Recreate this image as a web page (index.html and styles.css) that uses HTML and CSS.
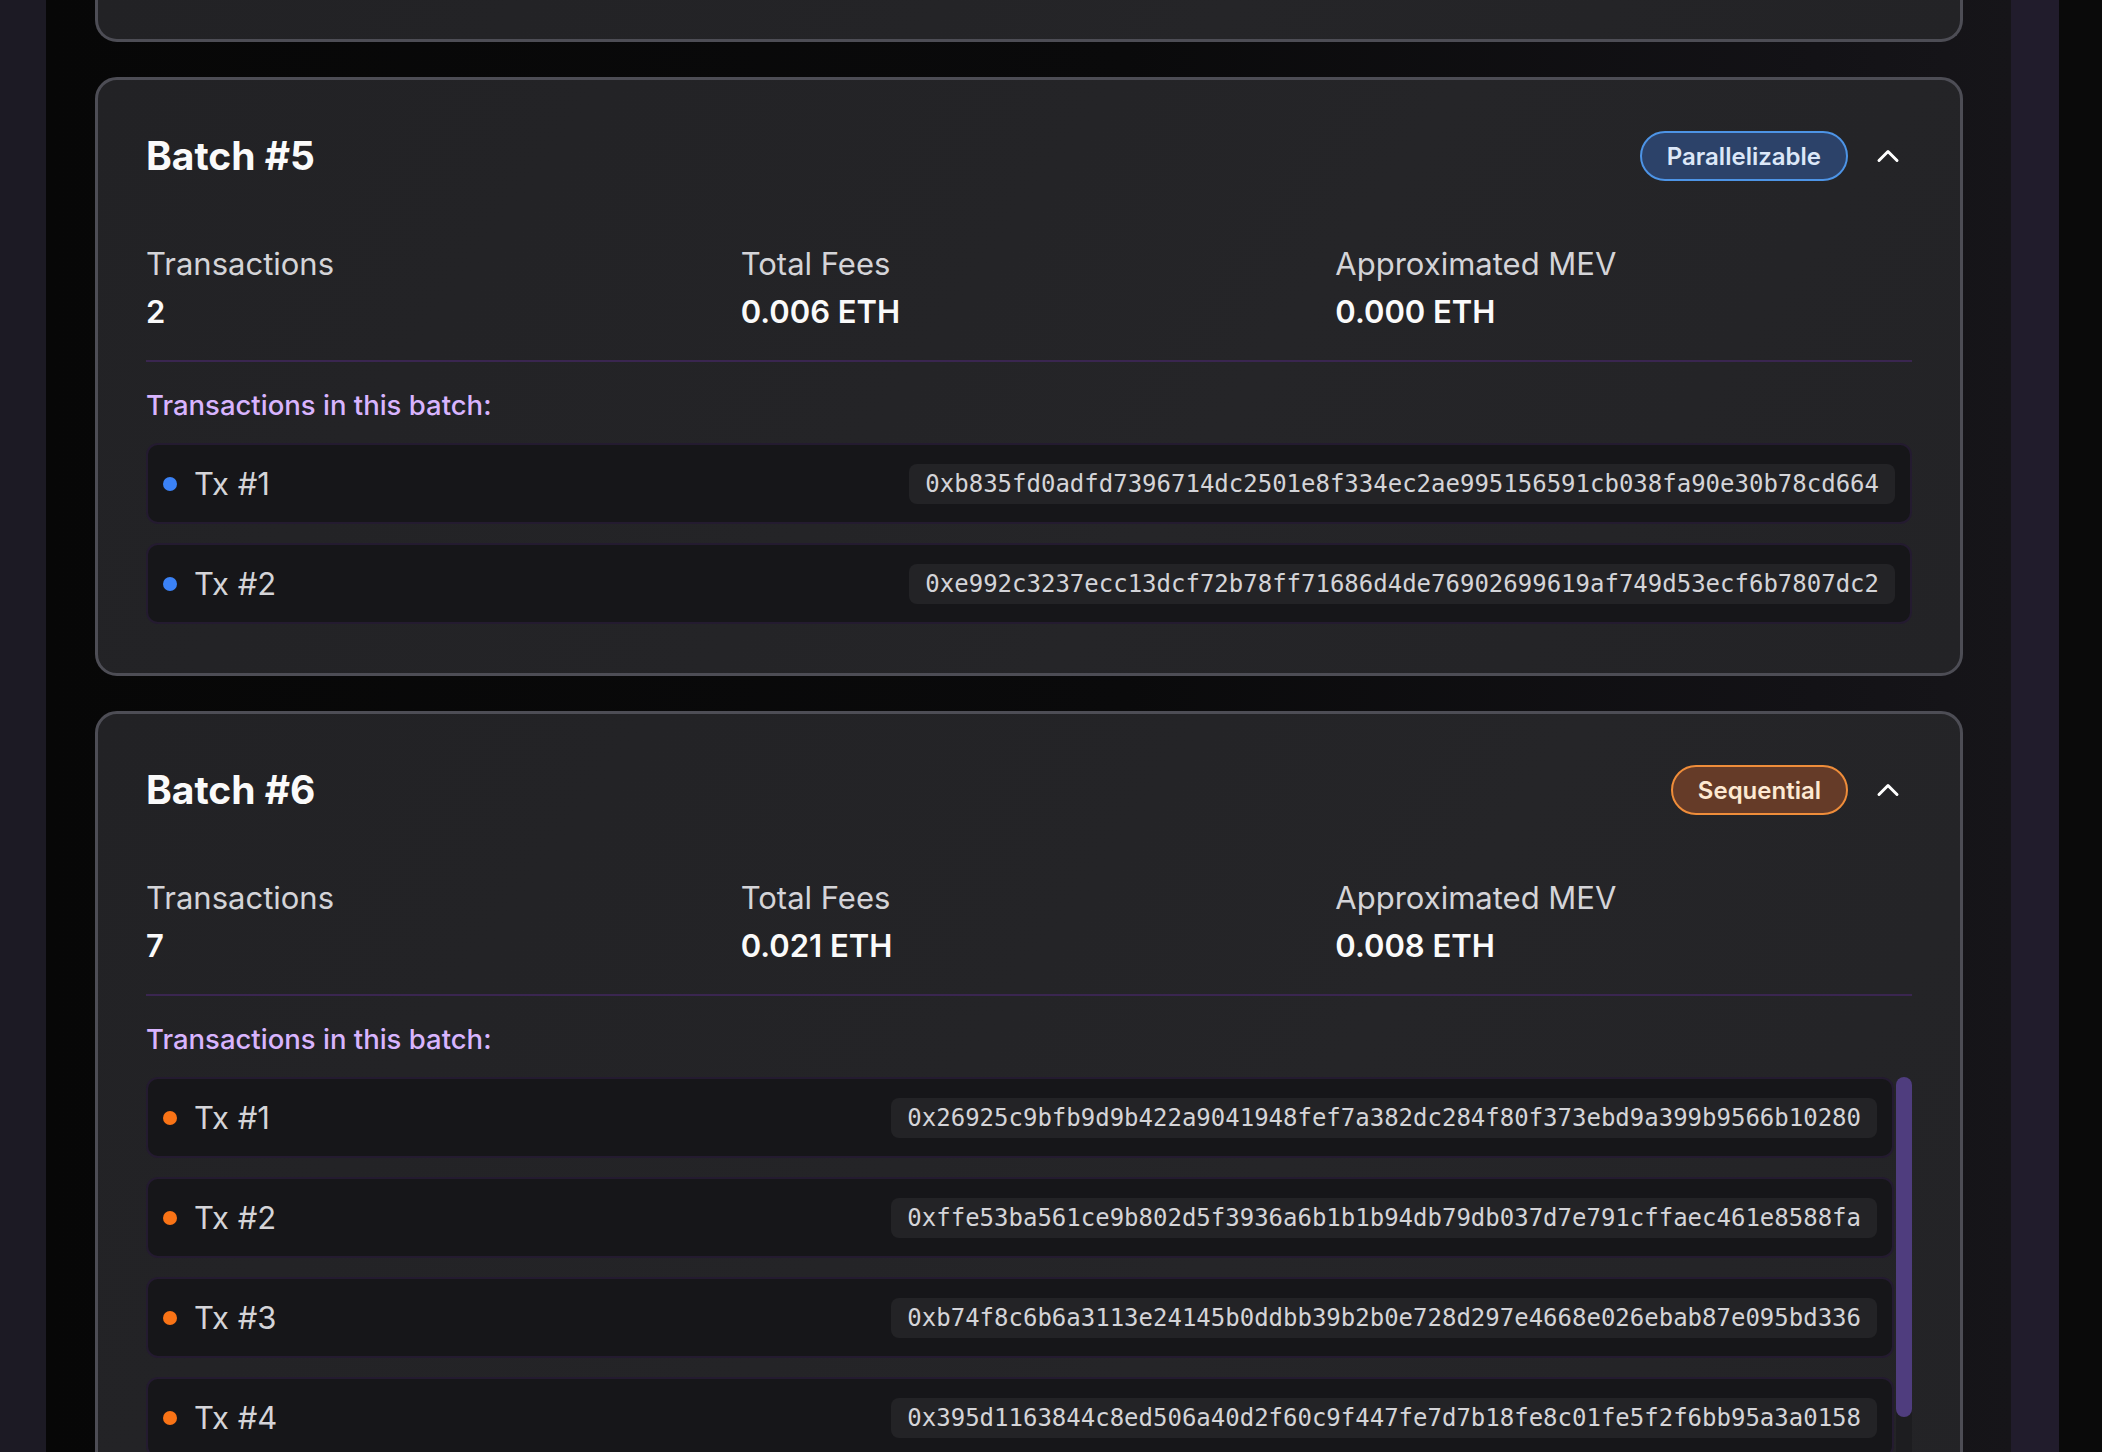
FILE: index.html
```html
<!DOCTYPE html>
<html lang="en">
<head>
<meta charset="utf-8">
<title>Batches</title>
<link rel="stylesheet" href="styles.css">
</head>
<body>
<div class="app">
  <aside class="rail rail-left"></aside>
  <main class="main">
    <section class="card card-tail"></section>

    <section class="card">
      <header class="card-head">
        <h2 class="card-title">Batch #5</h2>
        <div class="head-actions">
          <span class="badge badge-par">Parallelizable</span>
          <button class="toggle" type="button" aria-label="Collapse">
            <svg viewBox="0 0 24 24" width="36" height="36" fill="none" stroke="#fff" stroke-width="2" stroke-linecap="round" stroke-linejoin="round"><path d="m18 15-6-6-6 6"/></svg>
          </button>
        </div>
      </header>
      <div class="stats">
        <div class="stat"><div class="stat-label">Transactions</div><div class="stat-value">2</div></div>
        <div class="stat"><div class="stat-label">Total Fees</div><div class="stat-value">0.006 ETH</div></div>
        <div class="stat"><div class="stat-label">Approximated MEV</div><div class="stat-value">0.000 ETH</div></div>
      </div>
      <h3 class="list-title">Transactions in this batch:</h3>
      <div class="tx-list">
        <div class="tx"><span class="dot dot-blue"></span><span class="tx-name">Tx #1</span><code class="hash">0xb835fd0adfd7396714dc2501e8f334ec2ae995156591cb038fa90e30b78cd664</code></div>
        <div class="tx"><span class="dot dot-blue"></span><span class="tx-name">Tx #2</span><code class="hash">0xe992c3237ecc13dcf72b78ff71686d4de76902699619af749d53ecf6b7807dc2</code></div>
      </div>
    </section>

    <section class="card">
      <header class="card-head">
        <h2 class="card-title">Batch #6</h2>
        <div class="head-actions">
          <span class="badge badge-seq">Sequential</span>
          <button class="toggle" type="button" aria-label="Collapse">
            <svg viewBox="0 0 24 24" width="36" height="36" fill="none" stroke="#fff" stroke-width="2" stroke-linecap="round" stroke-linejoin="round"><path d="m18 15-6-6-6 6"/></svg>
          </button>
        </div>
      </header>
      <div class="stats">
        <div class="stat"><div class="stat-label">Transactions</div><div class="stat-value">7</div></div>
        <div class="stat"><div class="stat-label">Total Fees</div><div class="stat-value">0.021 ETH</div></div>
        <div class="stat"><div class="stat-label">Approximated MEV</div><div class="stat-value">0.008 ETH</div></div>
      </div>
      <h3 class="list-title">Transactions in this batch:</h3>
      <div class="tx-scroll">
        <div class="tx-list tx-list-clip">
          <div class="tx"><span class="dot dot-orange"></span><span class="tx-name">Tx #1</span><code class="hash">0x26925c9bfb9d9b422a9041948fef7a382dc284f80f373ebd9a399b9566b10280</code></div>
          <div class="tx"><span class="dot dot-orange"></span><span class="tx-name">Tx #2</span><code class="hash">0xffe53ba561ce9b802d5f3936a6b1b1b94db79db037d7e791cffaec461e8588fa</code></div>
          <div class="tx"><span class="dot dot-orange"></span><span class="tx-name">Tx #3</span><code class="hash">0xb74f8c6b6a3113e24145b0ddbb39b2b0e728d297e4668e026ebab87e095bd336</code></div>
          <div class="tx"><span class="dot dot-orange"></span><span class="tx-name">Tx #4</span><code class="hash">0x395d1163844c8ed506a40d2f60c9f447fe7d7b18fe8c01fe5f2f6bb95a3a0158</code></div>
          <div class="tx"><span class="dot dot-orange"></span><span class="tx-name">Tx #5</span><code class="hash">0x5a1c0e7b3d92f48a6e01c7b5d3f2a98e4b6c10d7f35e29a8c4b71d06e9f3a2c5</code></div>
        </div>
        <div class="scrollbar"><div class="scrollbar-thumb"></div></div>
      </div>
    </section>
  </main>
  <aside class="rail rail-right"></aside>
  <div class="edge"></div>
</div>
</body>
</html>
```

FILE: styles.css
```css
* { box-sizing: border-box; }

html, body {
  margin: 0;
  padding: 0;
  height: 1452px;
  overflow: hidden;
  background: #0a0a0a;
  font-family: Inter, "Noto Sans", "Liberation Sans", sans-serif;
  color: #fafafa;
}

.app {
  display: flex;
  height: 1452px;
}

.rail-left {
  width: 46px;
  flex: none;
  background: #1c1a24;
}

.main {
  flex: 1;
  display: flex;
  flex-direction: column;
  gap: 35px;
  padding: 0 48px 0 49px;
  background: linear-gradient(90deg, #070707 0%, #0a0a0b 55%, #131216 90%, #161519 100%);
  overflow: hidden;
}

.rail-right {
  width: 48px;
  flex: none;
  background: #211c2c;
}

.edge {
  width: 43px;
  flex: none;
  background: #0a0a0a;
}

.card {
  flex: none;
  border: 3px solid #4d4d55;
  border-radius: 22px;
  background: linear-gradient(125deg, #222225 0%, #242427 45%, #252528 60%, #232326 100%);
  padding: 51px 48px 49px 48px;
}

.card-tail {
  height: 42px;
  padding: 0;
  border-top: none;
  border-radius: 0 0 22px 22px;
}

.card-head {
  display: flex;
  align-items: center;
  justify-content: space-between;
  height: 50px;
}

.card-title {
  margin: 0;
  font-size: 39px;
  font-weight: 700;
  line-height: 50px;
  color: #fafafa;
}

.head-actions {
  display: flex;
  align-items: center;
  gap: 18px;
}

.badge {
  display: inline-flex;
  align-items: center;
  height: 50px;
  padding: 0 25px;
  border-radius: 999px;
  border: 2px solid;
  font-size: 24px;
  font-weight: 600;
}

.badge-par {
  background: #2c4269;
  border-color: #4d94e6;
  color: #dce7f8;
}

.badge-seq {
  background: #653b28;
  border-color: #ef8d3a;
  color: #fde9d2;
}

.toggle {
  display: flex;
  padding: 4px 6px 4px 4px;
  border: none;
  background: transparent;
  cursor: pointer;
}

.stats {
  margin-top: 63px;
  display: grid;
  grid-template-columns: repeat(3, 1fr);
  gap: 18px;
  padding-bottom: 28px;
  border-bottom: 2px solid #3a2650;
}

.stat-label {
  font-size: 31px;
  line-height: 40px;
  color: #d4d4d8;
  font-weight: 400;
}

.stat-value {
  margin-top: 8px;
  font-size: 31px;
  line-height: 40px;
  font-weight: 600;
  color: #fafafa;
}

.list-title {
  margin: 26px 0 0 0;
  font-size: 27.5px;
  line-height: 34px;
  font-weight: 500;
  color: #d8b4fe;
}

.tx-list {
  margin-top: 21px;
  display: flex;
  flex-direction: column;
  gap: 19px;
}

.tx-scroll {
  margin-top: 21px;
  display: flex;
  gap: 2px;
  height: 480px;
}

.tx-list-clip {
  margin-top: 0;
  flex: 1;
  min-width: 0;
  overflow: hidden;
}

.scrollbar {
  width: 16px;
  flex: none;
  border-radius: 8px;
  background: #1d1d20;
}

.scrollbar-thumb {
  height: 340px;
  border-radius: 8px;
  background: #4f3d7e;
}

.tx {
  flex: none;
  display: flex;
  align-items: center;
  height: 81px;
  padding: 0 15px;
  border: 2px solid #241b30;
  border-radius: 12px;
  background: #161619;
}

.dot {
  width: 14px;
  height: 14px;
  border-radius: 50%;
  flex: none;
  margin-right: 17px;
}

.dot-blue { background: #3b82f6; }
.dot-orange { background: #f97316; }

.tx-name {
  font-size: 31px;
  color: #d4d4d8;
}

.hash {
  margin-left: auto;
  height: 40px;
  line-height: 40px;
  padding: 0 16px;
  border-radius: 8px;
  background: #232326;
  font-family: "DejaVu Sans Mono", "Liberation Mono", monospace;
  font-size: 24px;
  color: #d4d4d8;
  white-space: nowrap;
}
```
